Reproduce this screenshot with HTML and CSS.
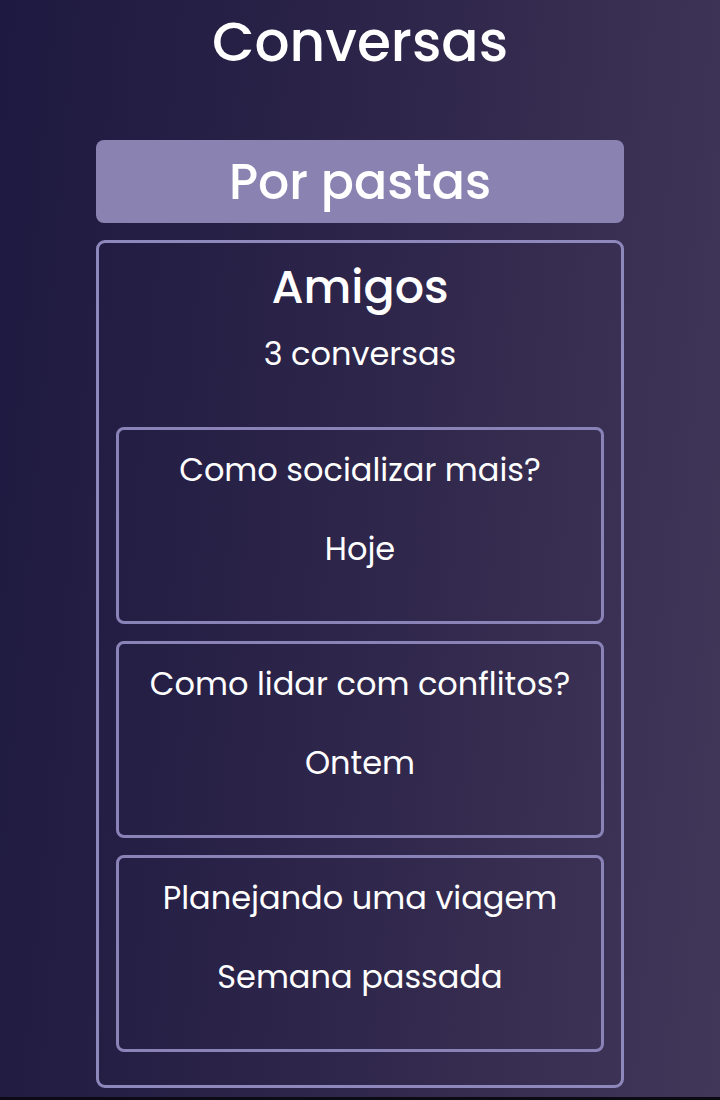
FILE: index.html
```html
<!DOCTYPE html>
<html lang="pt">
<head>
<meta charset="utf-8">
<title>Conversas</title>
<link rel="stylesheet" href="styles.css">
</head>
<body>
<main class="page">
  <h1 class="title">Conversas</h1>
  <div class="content">
    <button class="tab">Por pastas</button>
    <section class="folder">
      <h2 class="folder-name">Amigos</h2>
      <p class="folder-count">3 conversas</p>
      <div class="list">
        <article class="item">
          <h3 class="item-title">Como socializar mais?</h3>
          <p class="item-date">Hoje</p>
        </article>
        <article class="item">
          <h3 class="item-title">Como lidar com conflitos?</h3>
          <p class="item-date">Ontem</p>
        </article>
        <article class="item">
          <h3 class="item-title">Planejando uma viagem</h3>
          <p class="item-date">Semana passada</p>
        </article>
      </div>
    </section>
  </div>
</main>
</body>
</html>
```

FILE: styles.css
```css
* { box-sizing: border-box; }
html { background: #0c0a12; }
body {
  margin: 0;
  font-family: "Poppins", "Inter", "Noto Sans", sans-serif;
  color: #ffffff;
}
.page {
  height: 1097px;
  background: linear-gradient(95deg, #1e1940 0%, #2c2449 45%, #413759 100%);
  padding-top: 9px;
  overflow: hidden;
}
.title {
  margin: 0;
  text-align: center;
  font-size: 55px;
  line-height: 66px;
  font-weight: 500;
}
.content {
  width: 528px;
  margin: 65px auto 0;
  display: flex;
  flex-direction: column;
  gap: 17px;
}
.tab {
  height: 83px;
  border: none;
  border-radius: 8px;
  background: #8a83b1;
  color: #ffffff;
  font-family: inherit;
  font-size: 49px;
  font-weight: 500;
  line-height: 60px;
  display: flex;
  align-items: center;
  justify-content: center;
  padding: 0;
}
.folder {
  border: 3px solid #8f88bd;
  border-radius: 9px;
  padding: 19px 17px 33px;
  text-align: center;
}
.folder-name {
  margin: 0;
  font-size: 46px;
  font-weight: 500;
  line-height: 50px;
}
.folder-count {
  margin: 22px 0 0;
  font-size: 32px;
  font-weight: 400;
  line-height: 40px;
}
.list {
  margin-top: 53px;
  display: flex;
  flex-direction: column;
  gap: 17px;
}
.item {
  height: 197px;
  border: 3px solid #8a83b8;
  border-radius: 8px;
  padding-top: 20px;
}
.item-title {
  margin: 0;
  font-size: 32px;
  font-weight: 400;
  line-height: 40px;
}
.item-date {
  margin: 39px 0 0;
  font-size: 32px;
  font-weight: 400;
  line-height: 40px;
}
```
